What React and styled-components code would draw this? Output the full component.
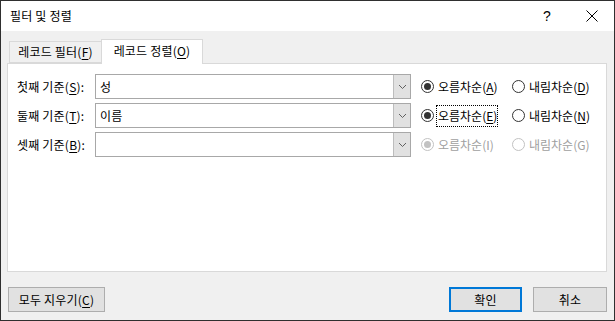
import React from "react";
import styled, { createGlobalStyle } from "styled-components";

const GlobalStyle = createGlobalStyle`
  html, body {
    margin: 0;
    padding: 0;
    background: #ffffff;
  }
  * {
    box-sizing: border-box;
  }
`;

const Window = styled.div`
  width: 615px;
  height: 321px;
  display: flex;
  flex-direction: column;
  background: #f0f0f0;
  border: 1px solid #2f2f2f;
  font-family: "Noto Sans CJK KR", "Noto Sans", sans-serif;
  font-size: 12px;
  letter-spacing: 0.2px;
  color: #000;
  overflow: hidden;
`;

const TitleBar = styled.div`
  height: 30px;
  flex: none;
  display: flex;
  align-items: center;
  background: #ffffff;
  padding: 0 16px 0 9px;
`;

const Title = styled.div`
  flex: 1;
  font-size: 12px;
  line-height: 14px;
  padding-bottom: 1px;
`;

const TitleButton = styled.div`
  width: ${(p) => p.w}px;
  height: 30px;
  margin-left: ${(p) => p.ml || 0}px;
  display: flex;
  align-items: center;
  justify-content: center;
  font-family: "Liberation Sans", sans-serif;
  font-size: 14px;
`;

const Body = styled.div`
  flex: 1;
  display: flex;
  flex-direction: column;
  padding: 8px 7px 7px 6px;
`;

const TabStrip = styled.div`
  display: flex;
  align-items: flex-end;
  height: 24px;
  margin-left: 2px;
  position: relative;
  z-index: 1;
`;

const Tab = styled.div`
  width: ${(p) => p.w}px;
  height: ${(p) => (p.active ? 25 : 22)}px;
  margin-bottom: ${(p) => (p.active ? -1 : 0)}px;
  background: ${(p) => (p.active ? "#ffffff" : "#f0f0f0")};
  border: 1px solid #d9d9d9;
  border-bottom: ${(p) => (p.active ? "none" : "1px solid #d9d9d9")};
  border-right: ${(p) => (p.active ? "1px solid #d9d9d9" : "none")};
  display: flex;
  align-items: center;
  justify-content: center;
  padding-bottom: ${(p) => (p.active ? 2 : 0)}px;
  line-height: 14px;
  white-space: nowrap;
`;

const Panel = styled.div`
  height: 209px;
  flex: none;
  background: #ffffff;
  border: 1px solid #d9d9d9;
  padding: 10px 9px;
  display: flex;
  flex-direction: column;
  gap: 4px;
`;

const Row = styled.div`
  display: flex;
  align-items: center;
  height: 25px;
`;

const Label = styled.div`
  width: 78px;
  flex: none;
  white-space: nowrap;
  line-height: 14px;
`;

const Combo = styled.div`
  width: 316px;
  height: 25px;
  flex: none;
  display: flex;
  border: 1px solid #a8a8a8;
  background: #ffffff;
`;

const ComboText = styled.div`
  flex: 1;
  padding-left: 4px;
  display: flex;
  align-items: center;
  line-height: 14px;
`;

const ComboButton = styled.div`
  width: 17px;
  flex: none;
  background: #e1e1e1;
  border-left: 1px solid #bdbdbd;
  display: flex;
  align-items: center;
  justify-content: center;
`;

const RadioGroup = styled.div`
  display: flex;
  margin-left: 10px;
`;

const RadioItem = styled.div`
  width: 91px;
  display: flex;
  align-items: center;
  gap: 4px;
  white-space: nowrap;
  color: ${(p) => (p.disabled ? "#a0a0a0" : "#000")};
`;

const RadioCircle = styled.span`
  width: 13px;
  height: 13px;
  flex: none;
  border-radius: 50%;
  border: 1px solid ${(p) => (p.disabled ? "#c2c2c2" : "#333333")};
  background: #ffffff;
  display: flex;
  align-items: center;
  justify-content: center;
  &::after {
    content: "";
    width: 7px;
    height: 7px;
    border-radius: 50%;
    background: ${(p) => (p.disabled ? "#c2c2c2" : "#333333")};
    display: ${(p) => (p.checked ? "block" : "none")};
  }
`;

const RadioText = styled.span`
  line-height: 14px;
  letter-spacing: 0;
  padding: 3px 0 3px 1px;
  border: 1px dotted ${(p) => (p.focused ? "#000" : "transparent")};
  margin-left: -2px;
`;

const Mn = styled.u`
  text-decoration: ${(p) => (p.off ? "none" : "underline")};
  text-underline-offset: 2px;
  text-decoration-thickness: 1px;
`;

const Footer = styled.div`
  display: flex;
  align-items: center;
  margin-top: 15px;
`;

const Button = styled.div`
  width: ${(p) => p.w}px;
  height: 25px;
  margin-left: ${(p) => p.ml || 0}px;
  display: flex;
  align-items: center;
  justify-content: center;
  background: #e1e1e1;
  border: ${(p) => (p.primary ? "2px solid #0078d7" : "1px solid #adadad")};
  line-height: 14px;
  white-space: nowrap;
`;

const Spacer = styled.div`
  flex: 1;
`;

const Chevron = () => (
  <svg width="9" height="6" viewBox="0 0 9 6">
    <path d="M1 1 L4.5 4.5 L8 1" fill="none" stroke="#606060" strokeWidth="1" />
  </svg>
);

const CloseIcon = () => (
  <svg width="12" height="12" viewBox="0 0 12 12">
    <path d="M0.5 0.5 L11.5 11.5 M11.5 0.5 L0.5 11.5" stroke="#000" strokeWidth="1" />
  </svg>
);

const rows = [
  { label: "첫째 기준", key: "S", value: "성", asc: "A", desc: "D", checked: true },
  { label: "둘째 기준", key: "T", value: "이름", asc: "E", desc: "N", checked: true, focused: true },
  { label: "셋째 기준", key: "B", value: "", asc: "I", desc: "G", checked: true, disabled: true },
];

export default function App() {
  return (
    <>
      <GlobalStyle />
      <Window>
        <TitleBar>
          <Title>필터 및 정렬</Title>
          <TitleButton w={12}>?</TitleButton>
          <TitleButton w={12} ml={33}>
            <CloseIcon />
          </TitleButton>
        </TitleBar>
        <Body>
          <TabStrip>
            <Tab w={92}>
              레코드 필터(<Mn>F</Mn>)
            </Tab>
            <Tab w={102} active>
              레코드 정렬(<Mn>O</Mn>)
            </Tab>
          </TabStrip>
          <Panel>
            {rows.map((r) => (
              <Row key={r.key}>
                <Label>
                  {r.label}(<Mn>{r.key}</Mn>):
                </Label>
                <Combo>
                  <ComboText>{r.value}</ComboText>
                  <ComboButton>
                    <Chevron />
                  </ComboButton>
                </Combo>
                <RadioGroup>
                  <RadioItem disabled={r.disabled}>
                    <RadioCircle checked={r.checked} disabled={r.disabled} />
                    <RadioText focused={r.focused}>
                      오름차순(<Mn off={r.disabled}>{r.asc}</Mn>)
                    </RadioText>
                  </RadioItem>
                  <RadioItem disabled={r.disabled}>
                    <RadioCircle disabled={r.disabled} />
                    <RadioText>
                      내림차순(<Mn off={r.disabled}>{r.desc}</Mn>)
                    </RadioText>
                  </RadioItem>
                </RadioGroup>
              </Row>
            ))}
          </Panel>
          <Footer>
            <Button w={97} ml={1}>
              모두 지우기(<Mn>C</Mn>)
            </Button>
            <Spacer />
            <Button w={73} primary>
              확인
            </Button>
            <Button w={74} ml={11}>
              취소
            </Button>
          </Footer>
        </Body>
      </Window>
    </>
  );
}
